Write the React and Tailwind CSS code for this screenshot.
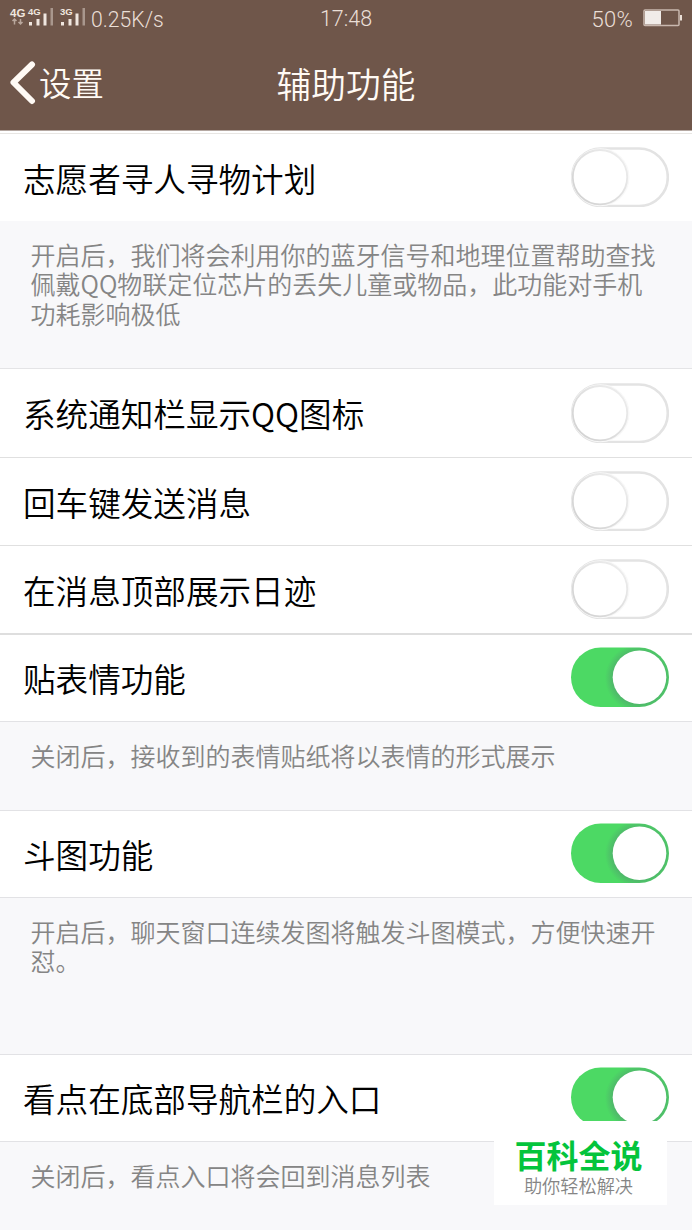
function Signal({ label }) {
  return (
    <svg viewBox="0 0 27 20" className="h-5 w-[27px] shrink-0 overflow-visible" fill="#f0e6df">
      <text x="0" y="6.500" className="font-['Liberation_Sans'] text-[9.500px] font-bold">{label}</text>
      <rect x="1" y="14" width="3" height="3.500" />
      <rect x="8.500" y="11" width="3" height="6.500" />
      <rect x="15.500" y="5.500" width="3" height="12" />
      <rect x="22.500" y="0" width="2.500" height="17.500" opacity="0.45" />
    </svg>
  );
}

function StatusBar() {
  return (
    <div className="grid h-[37px] grid-cols-[1fr_auto_1fr] items-center pl-[10px] pr-[10px] font-['Roboto','Noto_Sans_CJK_SC',sans-serif] text-[21.500px] font-light text-[#eadfd7]">
      <div className="flex items-center">
        <svg viewBox="0 0 18 20" className="h-5 w-[18px] shrink-0 overflow-visible" fill="#f0e6df">
          <text x="0" y="8.500" className="font-['Liberation_Sans'] text-[11.500px] font-bold">4G</text>
          <path d="M4.500 16.500v-5M2.500 13l2-2 2 2M10.500 11v5M8.500 14l2 2 2-2" fill="none" stroke="#b9a79d" strokeWidth="1.500" />
        </svg>
        <Signal label="4G" />
        <span className="w-[5px]" />
        <Signal label="3G" />
        <span className="ml-[4px] mt-[2px] whitespace-nowrap text-[21.200px]">0.25K/s</span>
      </div>
      <span className="mt-[2px]">17:48</span>
      <div className="flex items-center justify-end">
        <span className="mt-px text-[22px] tracking-[0.300px]">50%</span>
        <svg viewBox="0 0 39 18" className="-mt-[2px] ml-[10px] h-[18px] w-[39px]">
          <rect x="1" y="1" width="35" height="15.500" rx="1" fill="none" stroke="#c9b8af" strokeWidth="1.500" />
          <rect x="2" y="2" width="16" height="13.500" fill="#f1ece9" />
          <rect x="37" y="6" width="2" height="5.500" fill="#eadfd7" />
        </svg>
      </div>
    </div>
  );
}

function Header() {
  return (
    <header className="h-[130px] bg-[#6f564a]">
      <StatusBar />
      <div className="grid h-[93px] grid-cols-[1fr_auto_1fr] items-start text-[#fffaf5]">
        <div className="flex pl-[10px]">
          <svg viewBox="0 0 26 46" className="mt-[23px] h-[46px] w-[26px]" fill="none" stroke="#fffaf5" strokeWidth="6" strokeLinecap="round" strokeLinejoin="round">
            <path d="M22 4.500 3.500 22.500 22 41" />
          </svg>
          <span className="ml-[3px] mt-[21px] text-[32.400px] leading-[48px] font-[350]">设置</span>
        </div>
        <h1 className="mt-[22px] text-[34.700px] leading-[48px] font-[350]">辅助功能</h1>
      </div>
    </header>
  );
}

function Toggle({ on }) {
  if (on) {
    return (
      <svg viewBox="0 0 98 60" className="-mt-[2px] h-[60px] w-[98px] shrink-0">
        <defs>
          <radialGradient id="knobShade" gradientUnits="userSpaceOnUse" cx="68" cy="31" r="34">
            <stop offset="0.78" stopColor="#4fb96a" />
            <stop offset="1" stopColor="#4cd964" />
          </radialGradient>
        </defs>
        <rect x="0" y="0.500" width="98" height="59.500" rx="29.700" fill="url(#knobShade)" />
        <circle cx="68.500" cy="30.300" r="26.800" fill="#fff" />
      </svg>
    );
  }
  return (
    <svg viewBox="0 0 98 60" className="-mt-px h-[60px] w-[98px] shrink-0">
      <defs>
        <linearGradient id="knobEdge" x1="0" y1="1" x2="1" y2="0">
          <stop offset="0" stopColor="#cfcfcf" />
          <stop offset="1" stopColor="#f0f0f0" />
        </linearGradient>
      </defs>
      <rect x="1.200" y="1.500" width="95.600" height="57.500" rx="28.700" fill="#fff" stroke="#e3e3e3" strokeWidth="2.600" />
      <circle cx="29.500" cy="30.200" r="27.500" fill="none" stroke="#f8f8f8" strokeWidth="3" />
      <circle cx="29" cy="30.200" r="27.200" fill="#fff" stroke="url(#knobEdge)" strokeWidth="1.800" />
    </svg>
  );
}

function Row({ label, on, className }) {
  return (
    <div className={`flex items-center justify-between bg-white pl-[23px] pr-[23px] ${className}`}>
      <span className="text-[32.600px] leading-[48px] font-[350] text-black">{label}</span>
      <Toggle on={on} />
    </div>
  );
}

function Note({ lines, className }) {
  return (
    <div className={`pl-[30.500px] pt-[19px] text-[25px] leading-[29.300px] font-[350] text-[#858585] ${className}`}>
      {lines.map((line) => (
        <p key={line} className="whitespace-nowrap">{line}</p>
      ))}
    </div>
  );
}

export default function App() {
  return (
    <div className="relative h-[1230px] w-[692px] overflow-hidden bg-[#f8f8fa] font-['Noto_Sans_CJK_SC',sans-serif]">
      <Header />
      <div className="h-[4px] border-t border-b border-t-[#b5a9a3] border-b-[#e8e6e3] bg-white" />

      <Row label="志愿者寻人寻物计划" className="h-[87px]" />
      <Note
        className="h-[147px]"
        lines={[
          "开启后，我们将会利用你的蓝牙信号和地理位置帮助查找",
          "佩戴QQ物联定位芯片的丢失儿童或物品，此功能对手机",
          "功耗影响极低",
        ]}
      />

      <Row label="系统通知栏显示QQ图标" className="h-[89px] border-t border-[#e4e4e6]" />
      <Row label="回车键发送消息" className="h-[88px] border-t border-[#e0e0e0]" />
      <Row label="在消息顶部展示日迹" className="h-[88px] border-t border-[#e0e0e0]" />
      <Row label="贴表情功能" on className="h-[89px] border-t-2 border-b border-t-[#dedede] border-b-[#e2e2e5]" />
      <Note className="h-[88px]" lines={["关闭后，接收到的表情贴纸将以表情的形式展示"]} />

      <Row label="斗图功能" on className="h-[88px] border-y border-[#e2e2e5]" />
      <Note className="h-[156px]" lines={["开启后，聊天窗口连续发图将触发斗图模式，方便快速开", "怼。"]} />

      <Row label="看点在底部导航栏的入口" on className="h-[88px] border-y border-[#e2e2e5]" />
      <Note className="h-[88px]" lines={["关闭后，看点入口将会回到消息列表"]} />

      {/* Watermark badge */}
      <div className="absolute left-[494px] top-[1121px] flex h-[84px] w-[173px] flex-col items-center bg-white pr-[4px] pt-[11px]">
        <span className="text-[32px] leading-[44px] font-bold text-[#04c43c]">百科全说</span>
        <span className="text-[18.200px] leading-[18px] font-[350] text-[#858585]">助你轻松解决</span>
      </div>
    </div>
  );
}
